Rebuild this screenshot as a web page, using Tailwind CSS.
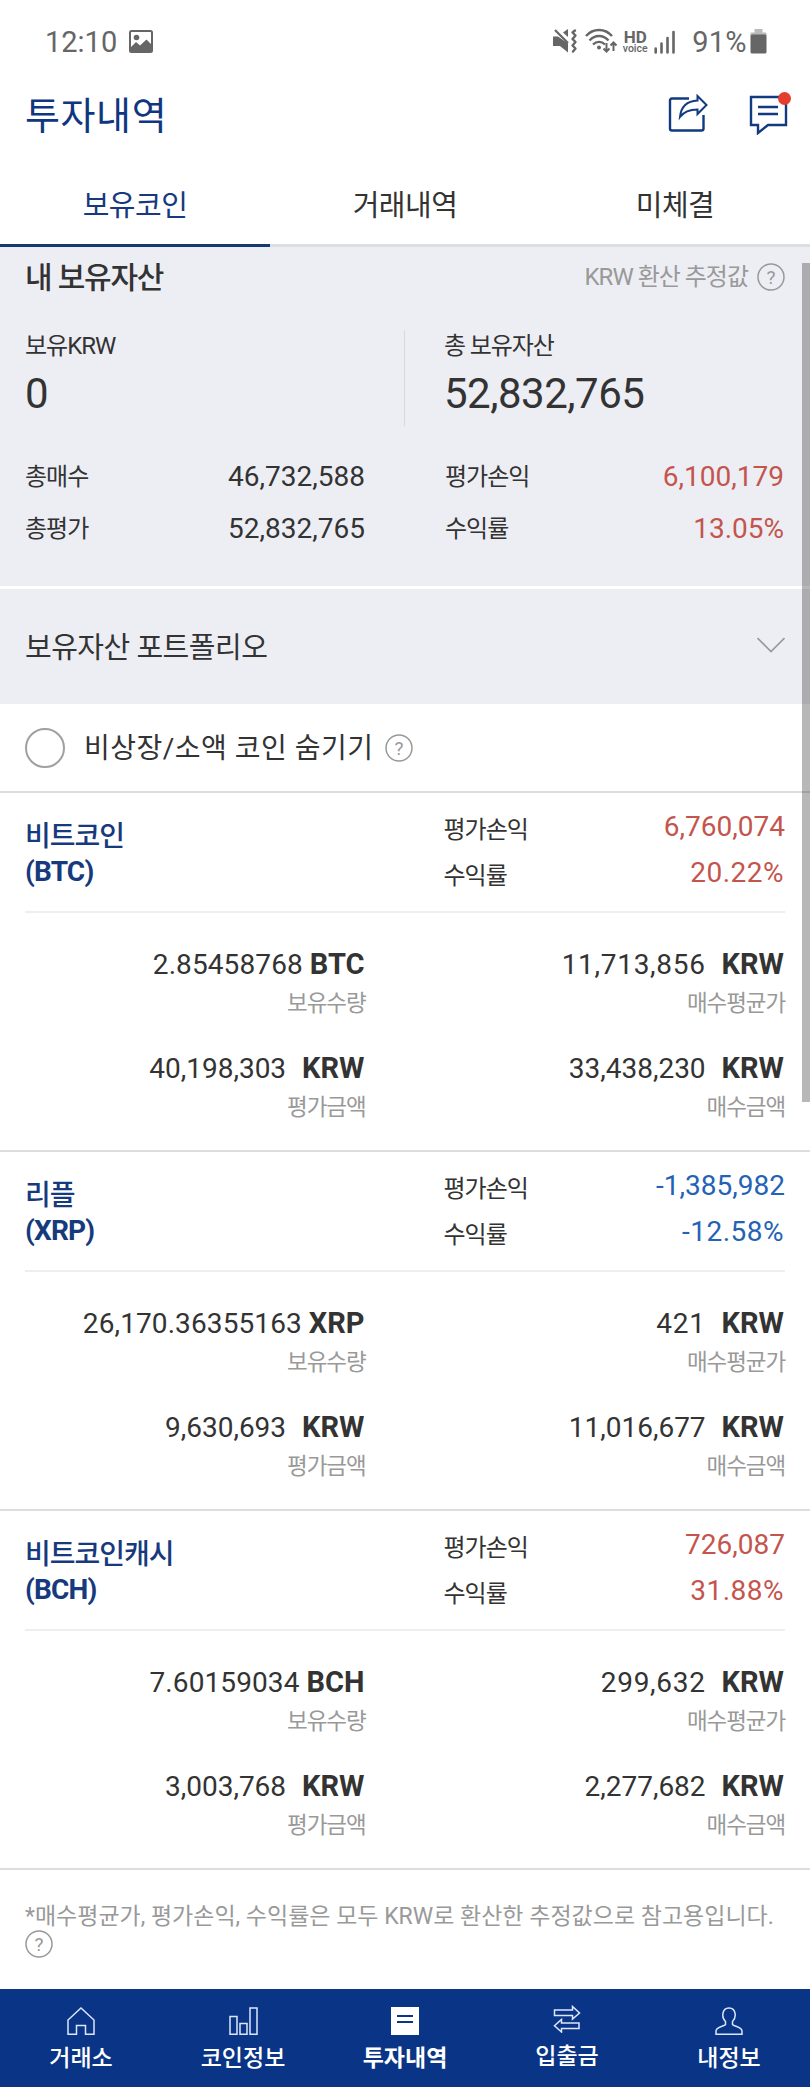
<!DOCTYPE html>
<html lang="ko">
<head>
    <meta charset="UTF-8">
    <meta name="viewport" content="width=device-width, initial-scale=1.0">
    <title>투자내역</title>
    <script src="https://cdn.jsdelivr.net/npm/@tailwindcss/browser@4"></script>
</head>
<body class="relative bg-white w-[810px] h-[2087px] overflow-hidden text-[#333] font-['Roboto','Noto_Sans_CJK_KR',sans-serif]">

    <!-- Status bar -->
    <div class="flex items-center h-[84px] pl-[45px] text-[#666]">
        <span class="text-[29px] leading-[84px]">12:10</span>
        <svg class="ml-[12px] mt-[-2px]" width="24" height="23" viewBox="0 0 24 23">
            <rect x="1" y="1" width="22" height="21" rx="1.5" fill="none" stroke="#666" stroke-width="2"/>
            <circle cx="7.500" cy="7.500" r="2.800" fill="#666"/>
            <path d="M1 18L7 12L11 15.500L17.500 9.500L23 15V22H1Z" fill="#666"/>
        </svg>
        <svg class="ml-[400px] mt-[-3px]" width="26" height="26" viewBox="0 0 26 26">
            <path d="M0 8.500H5L15 15.500V24.500L7 18H0Z" fill="#666"/>
            <path d="M10 4.500L15 1V9Z" fill="#666"/>
            <path d="M2 2L15 15" stroke="#666" stroke-width="2.200"/>
            <path d="M22 2.500L19.500 4.500L22.500 7.500L19.500 11L22.500 14L19.500 17.500L22.500 20.500L20 23.500" fill="none" stroke="#666" stroke-width="2.400" stroke-linecap="round" stroke-linejoin="round"/>
        </svg>
        <svg class="ml-[6px] mt-[-3px]" width="32" height="26" viewBox="0 0 32 26">
            <g fill="none" stroke="#666" stroke-width="2.400">
                <path d="M1 8C8 0 20 0 27 8"/>
                <path d="M4.500 12.500C10 6.500 18 6.500 23.500 12.500"/>
                <path d="M8 16.500C11.500 13 16.500 13 20 16.500"/>
                <path d="M21.500 15V23M18.500 20.500L21.500 23.500L24.500 20.500M28.500 23V15M25.500 17.500L28.500 14.500L31.500 17.500" stroke-width="2"/>
            </g>
            <circle cx="14" cy="19.500" r="2" fill="#666"/>
        </svg>
        <div class="flex flex-col items-center w-[26px] ml-[5px] mt-[-1px]">
            <span class="text-[17px] leading-[14px] font-bold">HD</span>
            <span class="text-[10.5px] leading-[10px] font-medium">voice</span>
        </div>
        <svg class="ml-[6px]" width="22" height="24" viewBox="0 0 22 24">
            <path d="M1.700 18.500V22.500M7.500 13.500V22.500M13.500 8V22.500M19.500 2V22.500" stroke="#666" stroke-width="2.600" stroke-linecap="round"/>
        </svg>
        <span class="ml-[16px] text-[29px] leading-[84px] tracking-[0.2px]">91%</span>
        <svg class="ml-[3px] mt-[-2px]" width="17" height="25" viewBox="0 0 17 25">
            <rect x="4.500" y="0" width="8" height="5" fill="#bbb"/>
            <rect x="0.500" y="3.500" width="16" height="4" rx="1" fill="#bbb"/>
            <rect x="0.500" y="5.500" width="16" height="19" rx="1.500" fill="#666"/>
        </svg>
    </div>

    <!-- Title -->
    <header class="flex items-center h-[80px] pl-[25px] pr-[19px] mt-[-8px]">
        <h1 class="flex-1 text-[38px] leading-[80px] tracking-[0.6px] text-[#0f3680]">투자내역</h1>
        <svg class="mr-[41px] mt-[-5px]" width="40" height="40" viewBox="0 0 40 40" fill="none" stroke="#123a80" stroke-width="2.4">
            <path d="M21 4.500H4Q2 4.500 2 6.500V34.500Q2 36.500 4 36.500H33.500Q35.500 36.500 35.500 34.500V21"/>
            <path d="M29.500 2L38.500 11L29.500 20V15.500C21 15.500 16 17.500 12 23C13 13 19 7 29.500 6.500Z" stroke-width="2"/>
        </svg>
        <div class="relative mt-[-4px]">
            <svg width="42" height="42" viewBox="0 0 42 42" fill="none" stroke="#123a80" stroke-width="2.400">
                <path d="M2 4H37V32H19L9 40V32H2Z"/>
                <path d="M9 14H29M9 21H29"/>
            </svg>
            <span class="absolute right-0 top-[-1px] w-[13px] h-[13px] rounded-full bg-[#e63c2e]"></span>
        </div>
    </header>

    <!-- Tabs -->
    <nav class="grid grid-cols-3 h-[91px] text-center text-[29px] leading-[76px] tracking-[-0.5px]">
        <div class="pt-[12px] border-b-[3px] border-[#163a6f] text-[#163a7d]">보유코인</div>
        <div class="pt-[12px] border-b-[3px] border-[#dddee2]">거래내역</div>
        <div class="pt-[12px] border-b-[3px] border-[#dddee2]">미체결</div>
    </nav>

    <!-- Summary -->
    <section class="h-[339px] bg-[#edeef4] px-[25px]">
        <div class="flex items-center h-[60px]">
            <h2 class="flex-1 mt-[1px] text-[30px] font-medium tracking-[-1.2px]">내 보유자산</h2>
            <span class="text-[24px] tracking-[-1px] text-[#999] mr-[9px]">KRW 환산 추정값</span>
            <svg width="28" height="28" viewBox="0 0 28 28" class="text-[#999]"><circle cx="14" cy="14" r="13" fill="none" stroke="currentColor" stroke-width="1.500"/><text x="14" y="20.500" text-anchor="middle" font-size="19" fill="currentColor">?</text></svg>
        </div>
        <div class="grid grid-cols-2 mt-[23px] h-[96px]">
            <div>
                <p class="text-[24px] leading-[32px] tracking-[-1px]">보유KRW</p>
                <p class="text-[42px] leading-[64px] tracking-[-0.5px]">0</p>
            </div>
            <div class="ml-[-1px] border-l border-[#d9dadf] pl-[39px]">
                <p class="text-[24px] leading-[32px] tracking-[-1.1px]">총 보유자산</p>
                <p class="text-[42px] leading-[64px] tracking-[-0.5px]">52,832,765</p>
            </div>
        </div>
        <div class="grid grid-cols-2 gap-x-[80px] mt-[25px] leading-[52px]">
            <div class="flex justify-between"><span class="text-[24px] tracking-[-1px]">총매수</span><span class="text-[28px]">46,732,588</span></div>
            <div class="flex justify-between mr-px"><span class="text-[24px] tracking-[-1px]">평가손익</span><span class="text-[28px] text-[#c4554d]">6,100,179</span></div>
            <div class="flex justify-between"><span class="text-[24px] tracking-[-1px]">총평가</span><span class="text-[28px]">52,832,765</span></div>
            <div class="flex justify-between mr-px"><span class="text-[24px] tracking-[-1px]">수익률</span><span class="text-[28px] text-[#c4554d]">13.05%</span></div>
        </div>
    </section>

    <!-- Portfolio -->
    <section class="flex items-center justify-between h-[118px] border-t-[3px] border-white bg-[#edeef4] px-[25px]">
        <h2 class="mt-[4px] text-[29px] tracking-[-0.5px]">보유자산 포트폴리오</h2>
        <svg class="mt-[-4px]" width="28" height="16" viewBox="0 0 28 16" fill="none" stroke="#999" stroke-width="1.600"><path d="M0.500 1L14 14.500L27.500 1"/></svg>
    </section>

    <!-- Hide small coins -->
    <div class="flex items-center h-[87px] px-[25px]">
        <span class="w-10 h-10 rounded-full border-2 border-[#a0a0a0]"></span>
        <span class="ml-[19px] mt-[3px] text-[28px] tracking-[0.5px]">비상장/소액 코인 숨기기</span>
        <svg width="28" height="28" viewBox="0 0 28 28" class="ml-[11px] text-[#999]"><circle cx="14" cy="14" r="13" fill="none" stroke="currentColor" stroke-width="1.500"/><text x="14" y="20.500" text-anchor="middle" font-size="19" fill="currentColor">?</text></svg>
    </div>

    <!-- Coins -->
    <main id="coins"></main>

    <!-- Note -->
    <div class="h-[121px] border-t-2 border-[#ddd] px-[25px] pt-[31px] text-[#999]">
        <p class="text-[23px] leading-[32px] whitespace-nowrap">*매수평균가, 평가손익, 수익률은 모두 KRW로 환산한 추정값으로 참고용입니다.</p>
        <svg class="mt-[-3px]" width="28" height="28" viewBox="0 0 28 28"><circle cx="14" cy="14" r="13" fill="none" stroke="currentColor" stroke-width="1.500"/><text x="14" y="20.500" text-anchor="middle" font-size="19" fill="currentColor">?</text></svg>
    </div>

    <!-- Bottom menu -->
    <nav class="grid grid-cols-5 h-[98px] bg-[#0a3586] pt-[18px] text-[23px] leading-[48px] font-medium text-white">
        <div class="flex flex-col items-center">
            <svg width="28" height="28" viewBox="0 0 28 28" fill="none" stroke="#dce6fb" stroke-width="1.500"><path d="M14 1L27 13V27.200H18.500V18.500H9.500V27.200H1V13Z"/></svg>
            <span>거래소</span>
        </div>
        <div class="flex flex-col items-center">
            <svg width="29" height="28" viewBox="0 0 29 28" fill="none" stroke="#dce6fb" stroke-width="1.500"><path d="M1 9.500H8V27.200H1ZM11 16.500H18V27.200H11ZM21 1H28V27.200H21Z"/></svg>
            <span>코인정보</span>
        </div>
        <div class="flex flex-col items-center font-bold">
            <svg width="28" height="28" viewBox="0 0 28 28"><rect width="28" height="28" fill="#fff"/><path d="M6 9H22M6 15H22" stroke="#0a3586" stroke-width="2.200"/></svg>
            <span>투자내역</span>
        </div>
        <div class="flex flex-col items-center mt-[-2px]">
            <svg width="28" height="28" viewBox="0 0 28 28" fill="none" stroke="#dce6fb" stroke-width="1.500"><path d="M1.500 5H19.500V1.500L26.500 8L19.500 14V10.500H1.500Z"/><path d="M26 18H8.500V14.500L1.500 20.800L8.500 27V23.500H26Z"/></svg>
            <span>입출금</span>
        </div>
        <div class="flex flex-col items-center">
            <svg width="28" height="28" viewBox="0 0 28 28" fill="none" stroke="#dce6fb" stroke-width="1.500"><path d="M10.500 14.500C6.500 11 6.500 1 14 1S21.500 11 17.500 14.500V17.500C19 19.500 27 19.500 27 24V27.200H1V24C1 19.500 9 19.500 10.500 17.500Z"/></svg>
            <span>내정보</span>
        </div>
    </nav>

    <!-- Scrollbar -->
    <div class="absolute right-0 top-[263px] w-[8px] h-[839px] bg-black/28"></div>

    <script>
        const coins = [
            { name: '비트코인', code: 'BTC', profit: '6,760,074', rate: '20.22%', amount: '2.85458768', avg: '11,713,856', value: '40,198,303', buy: '33,438,230' },
            { name: '리플', code: 'XRP', profit: '-1,385,982', rate: '-12.58%', amount: '26,170.36355163', avg: '421', value: '9,630,693', buy: '11,016,677' },
            { name: '비트코인캐시', code: 'BCH', profit: '726,087', rate: '31.88%', amount: '7.60159034', avg: '299,632', value: '3,003,768', buy: '2,277,682' }
        ];

        // One number with its unit and the label under it
        function cell(number, unit, label, tracking = '') {
            const gap = unit === 'KRW' ? 'ml-[16px]' : 'ml-[7px]';
            return `
                <div class="text-right leading-[40px]">
                    <p class="pr-px text-[28px]"><span class="${tracking}">${number}</span><b class="text-[29px] ${gap}">${unit}</b></p>
                    <p class="mt-[-2px] text-[22.5px] tracking-[-1.1px] text-[#999]">${label}</p>
                </div>`;
        }

        document.getElementById('coins').innerHTML = coins.map(c => {
            const color = c.profit.startsWith('-') ? 'text-[#2463b4]' : 'text-[#c4554d]';
            return `
            <section class="h-[359px] border-t-2 border-[#ddd] px-[25px]">
                <div class="grid grid-cols-2 gap-x-[79px] h-[120px] border-b-2 border-[#eee]">
                    <h3 class="pt-[26px] text-[28px] leading-[35px] font-medium tracking-[-1px] text-[#163a7d]">${c.name}<br><b class="tracking-[-0.8px]">(${c.code})</b></h3>
                    <div class="flex justify-between pt-[11px] leading-[46px]">
                        <div class="ml-[-1px] pt-[3px] text-[24px] tracking-[-1px]"><p>평가손익</p><p>수익률</p></div>
                        <div class="text-right text-[28px] ${color}"><p>${c.profit}</p><p class="pr-px tracking-[0.5px]">${c.rate}</p></div>
                    </div>
                </div>
                <div class="grid grid-cols-2 gap-x-[79px] gap-y-[25px] pt-[31px]">
                    ${cell(c.amount, c.code, '보유수량', 'tracking-[0.1px]')}
                    ${cell(c.avg, 'KRW', '매수평균가', 'tracking-[0.7px]')}
                    ${cell(c.value, 'KRW', '평가금액')}
                    ${cell(c.buy, 'KRW', '매수금액')}
                </div>
            </section>`;
        }).join('');
    </script>
</body>
</html>
